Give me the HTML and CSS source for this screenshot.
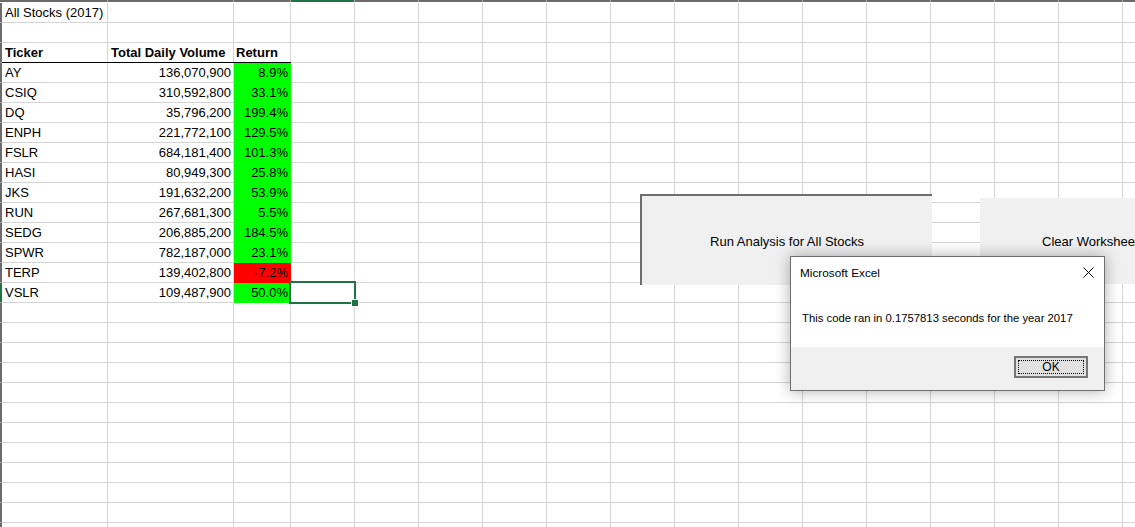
FILE: index.html
```html
<!DOCTYPE html>
<html lang="en">
<head>
<meta charset="utf-8">
<title>All Stocks (2017)</title>
<link rel="stylesheet" href="styles.css">
</head>
<body>
<div class="app">
  <div class="colbar"><div class="colbar-sel"></div></div>
  <div class="main">
    <div class="rowbar"><div class="rowbar-sel"></div></div>
    <div class="sheet">
      <div class="grid">
        <div class="a title">All Stocks (2017)</div>
        <div class="blank"></div>
        <div class="a h">Ticker</div><div class="b h hl">Total Daily Volume</div><div class="c h hl">Return</div>
        <div class="a">AY</div><div class="b">136,070,900</div><div class="c up">8.9%</div>
        <div class="a">CSIQ</div><div class="b">310,592,800</div><div class="c up">33.1%</div>
        <div class="a">DQ</div><div class="b">35,796,200</div><div class="c up">199.4%</div>
        <div class="a">ENPH</div><div class="b">221,772,100</div><div class="c up">129.5%</div>
        <div class="a">FSLR</div><div class="b">684,181,400</div><div class="c up">101.3%</div>
        <div class="a">HASI</div><div class="b">80,949,300</div><div class="c up">25.8%</div>
        <div class="a">JKS</div><div class="b">191,632,200</div><div class="c up">53.9%</div>
        <div class="a">RUN</div><div class="b">267,681,300</div><div class="c up">5.5%</div>
        <div class="a">SEDG</div><div class="b">206,885,200</div><div class="c up">184.5%</div>
        <div class="a">SPWR</div><div class="b">782,187,000</div><div class="c up">23.1%</div>
        <div class="a">TERP</div><div class="b">139,402,800</div><div class="c down">-7.2%</div>
        <div class="a">VSLR</div><div class="b">109,487,900</div><div class="c up">50.0%</div><div class="d selected"></div>
      </div>
    </div>
  </div>
</div>

<div class="btn btn-run">Run Analysis for All Stocks</div>
<div class="btn btn-clear">Clear Worksheet</div>

<div class="dialog">
  <div class="dlg-title">
    <span>Microsoft Excel</span>
    <svg class="dlg-close" width="11" height="11" viewBox="0 0 11 11"><path d="M0.5 0.5 L10.5 10.5 M10.5 0.5 L0.5 10.5" stroke="#000" stroke-width="1" fill="none"/></svg>
  </div>
  <div class="dlg-body">This code ran in 0.1757813 seconds for the year 2017</div>
  <div class="dlg-foot"><div class="ok"><span>OK</span></div></div>
</div>
</body>
</html>
```

FILE: styles.css
```css
* { box-sizing: border-box; margin: 0; padding: 0; }
html, body { width: 1135px; height: 527px; overflow: hidden; background: #fff; }
body {
  position: relative;
  font-family: "Liberation Sans", Arial, sans-serif;
  font-size: 13px;
  color: #000;
}

.app { display: flex; flex-direction: column; height: 527px; }

.colbar {
  flex: none;
  height: 3px;
  border-bottom: 1px solid #fff;
  background:
    linear-gradient(#a6a6a6, #a6a6a6) 107px 0 / 1px 100% no-repeat,
    linear-gradient(#a6a6a6, #a6a6a6) 233px 0 / 1px 100% no-repeat,
    repeating-linear-gradient(to right, #a6a6a6 0 1px, transparent 1px 64px) 290px 0 / calc(100% - 290px) 100% no-repeat,
    #6b6b6b;
}
.colbar-sel { margin-left: 291px; width: 63px; height: 2px; background: #217346; }

.main { flex: 1; display: flex; }

.rowbar {
  flex: none;
  width: 2px;
  background: repeating-linear-gradient(to bottom, #6b6b6b 0 19px, #a6a6a6 19px 20px);
}
.rowbar-sel { margin-top: 280px; height: 19px; background: #217346; }

.sheet {
  flex: 1;
  background:
    linear-gradient(#d4d4d4, #d4d4d4) 105px 0 / 1px 100% no-repeat,
    linear-gradient(#d4d4d4, #d4d4d4) 231px 0 / 1px 100% no-repeat,
    repeating-linear-gradient(to right, #d4d4d4 0 1px, transparent 1px 64px) 288px 0 / calc(100% - 288px) 100% no-repeat,
    repeating-linear-gradient(to bottom, transparent 0 19px, #d4d4d4 19px 20px);
}

.grid {
  display: grid;
  grid-template-columns: 106px 126px 57px 64px;
  grid-auto-rows: 20px;
  line-height: 19px;
  white-space: nowrap;
}
.a { grid-column: 1; padding-left: 3px; }
.b { grid-column: 2; text-align: right; padding-right: 3px; }
.c { grid-column: 3; text-align: right; padding-right: 3px; }
.d { grid-column: 4; }
.blank { grid-column: 1 / -1; }
.title { overflow: visible; }
.h { font-weight: bold; box-shadow: inset 0 -1px 0 #000; }
.hl { text-align: left; padding-left: 3px; }
.c.hl { padding-left: 2px; }
.up { background: #00ff00; }
.down { background: #ff0000; }

.selected { position: relative; }
.selected::before {
  content: "";
  position: absolute;
  left: -2px; top: -2px; right: -1px; bottom: -1px;
  border: 2px solid #217346;
}
.selected::after {
  content: "";
  position: absolute;
  right: -4px; bottom: -4px;
  width: 6px; height: 6px;
  background: #217346;
  border: 1px solid #fff;
}

.btn {
  position: absolute;
  display: flex;
  align-items: center;
  background: #f0f0f0;
  font-size: 13px;
}
.btn-run {
  left: 640px; top: 194px; width: 292px; height: 91px;
  justify-content: center;
  border-top: 2px solid #6d6d6d;
  border-left: 2px solid #6d6d6d;
  padding-top: 2px;
}
.btn-clear {
  left: 980px; top: 198px; width: 200px; height: 86px;
  padding-left: 62px;
  padding-top: 1px;
}

.dialog {
  position: absolute;
  left: 790px; top: 256px; width: 315px; height: 135px;
  background: #fff;
  border: 1px solid #6e6e6e;
  box-shadow: 0 0 14px rgba(0, 0, 0, 0.32);
  display: flex;
  flex-direction: column;
  font-family: "Liberation Sans", Arial, sans-serif;
  font-size: 11.3px;
}
.dlg-title {
  height: 32px;
  display: flex;
  align-items: center;
  justify-content: space-between;
  padding: 0 10px 0 9px;
  font-size: 11.8px;
}
.dlg-close { display: block; margin-bottom: 1px; }
.dlg-body {
  height: 58px;
  padding-left: 11px;
  padding-top: 22px;
  line-height: 14px;
}
.dlg-foot {
  flex: 1;
  background: #f0f0f0;
  display: flex;
  justify-content: flex-end;
  align-items: flex-start;
  padding: 9px 16px 0 0;
}
.ok {
  width: 74px; height: 22px;
  border: 2px solid #767676;
  background: #e1e1e1;
  padding: 2px;
  display: flex;
}
.ok span {
  flex: 1;
  border: 1px dotted #000;
  text-align: center;
  line-height: 12px;
  font-size: 12px;
}
```
